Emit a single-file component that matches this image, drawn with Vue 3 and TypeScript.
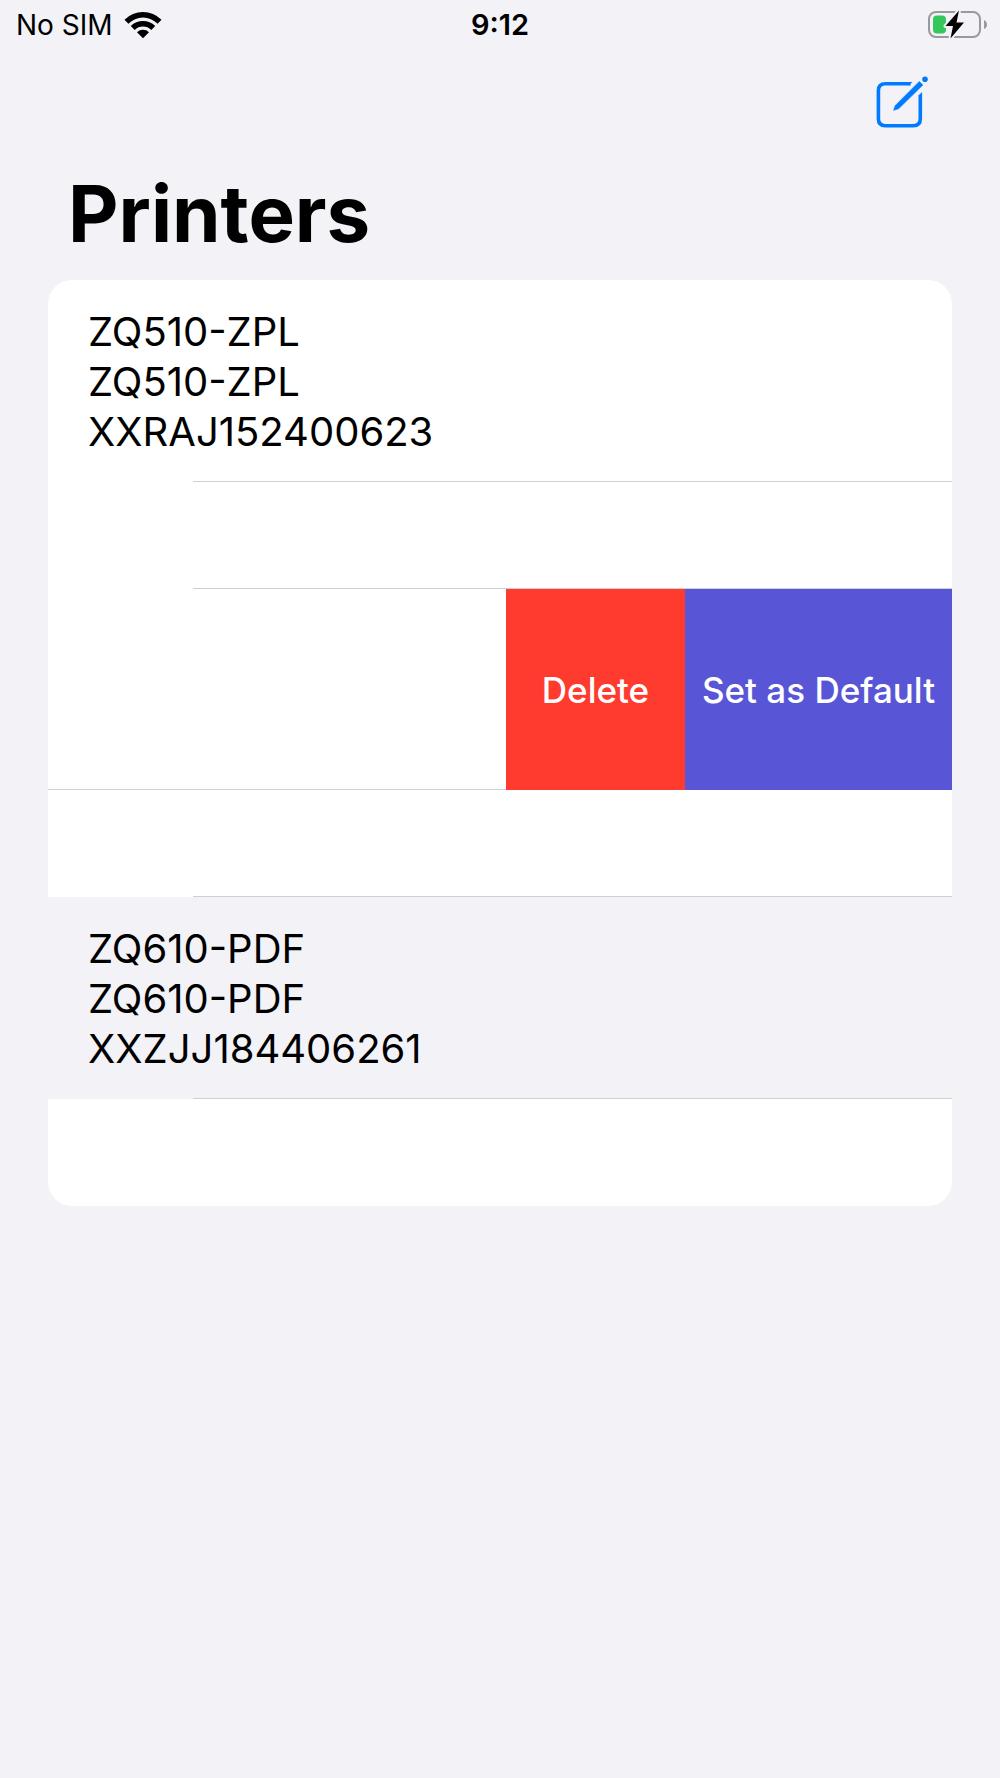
<script setup lang="ts">
interface Action {
  label: string
  kind: 'delete' | 'default'
}

interface Row {
  id: number
  lines?: string[]
  actions?: Action[]
  selected?: boolean
}

const rows: Row[] = [
  { id: 1, lines: ['ZQ510-ZPL', 'ZQ510-ZPL', 'XXRAJ152400623'] },
  { id: 2 },
  {
    id: 3,
    actions: [
      { label: 'Delete', kind: 'delete' },
      { label: 'Set as Default', kind: 'default' },
    ],
  },
  { id: 4 },
  { id: 5, lines: ['ZQ610-PDF', 'ZQ610-PDF', 'XXZJJ184406261'], selected: true },
  { id: 6 },
]
</script>

<template>
  <div class="screen">
    <div class="status">
      <div class="carrier">
        <span>No SIM</span>
        <svg width="38" height="28" viewBox="0 0 38 28" aria-hidden="true">
          <path d="M0.5 8.8A26 26 0 0 1 37.5 8.8L33.6 12.7A20.5 20.5 0 0 0 4.4 12.7Z" />
          <path d="M6.8 15.1A17.2 17.2 0 0 1 31.2 15.1L27.3 19A11.7 11.7 0 0 0 10.7 19Z" />
          <path d="M13 21.3A8.5 8.5 0 0 1 25 21.3L19 27.3Z" />
        </svg>
      </div>
      <time class="time">9:12</time>
      <div class="power">
        <svg width="60" height="30" viewBox="0 0 60 30" role="img" aria-label="Charging">
          <rect x="2" y="2" width="51" height="25" rx="7" fill="none" stroke="#9a9a9e" stroke-width="2" />
          <path d="M57 10Q60 11.500 60 14.500T57 19Z" fill="#9a9a9e" />
          <rect x="6" y="5.500" width="13" height="18" rx="4" fill="#34c759" />
          <path
            d="M32 0.500L18.500 16H26L23.500 28.500L37 12.500H29.500Z"
            fill="#000"
            stroke="#f2f2f7"
            stroke-width="4"
            stroke-linejoin="round"
            paint-order="stroke"
          />
        </svg>
      </div>
    </div>

    <header class="nav">
      <button class="compose" type="button" aria-label="Edit printers">
        <svg width="54" height="54" viewBox="0 0 54 54" fill="none" aria-hidden="true">
          <path d="M34.500 8.700H9.300Q2.400 8.700 2.400 15.600V43.800Q2.400 50.700 9.300 50.700H37.400Q44.300 50.700 44.300 43.800V20.500" stroke="#007aff" stroke-width="3.600" />
          <path d="M34 6.900H36.400L32.800 10.500H34ZM42.500 21V20.600L46.100 17V21Z" fill="#007aff" />
          <path d="M17.600 35.300L19.300 30.500L43.300 6.400L46.900 10L22.600 33.700Z" fill="#007aff" stroke="#007aff" stroke-width="0.600" stroke-linejoin="round" />
          <circle cx="49" cy="4.300" r="2.800" fill="#007aff" />
        </svg>
      </button>
    </header>

    <main>
      <h1>Printers</h1>
      <ul class="list">
        <li
          v-for="row in rows"
          :key="row.id"
          class="row"
          :class="{ selected: row.selected, swiped: row.actions }"
        >
          <div v-if="row.lines" class="info">
            <p v-for="(line, i) in row.lines" :key="i">{{ line }}</p>
          </div>
          <div v-if="row.actions" class="actions">
            <button
              v-for="action in row.actions"
              :key="action.kind"
              type="button"
              :class="action.kind"
            >
              {{ action.label }}
            </button>
          </div>
        </li>
      </ul>
    </main>
  </div>
</template>

<style>
body {
  margin: 0;
  background: #f2f2f7;
}
</style>

<style scoped>
.screen {
  min-height: 100vh;
  background: #f2f2f7;
  color: #000;
  font-family: Inter, "Liberation Sans", sans-serif;
}

.status {
  display: grid;
  grid-template-columns: 1fr auto 1fr;
  align-items: center;
  height: 50px;
  padding: 0 13px;
  font-size: 28px;
  line-height: 36px;
}

.carrier {
  display: flex;
  align-items: center;
  gap: 11px;
  padding-left: 3px;
}

.time {
  font-size: 29px;
  font-weight: 600;
}

.power {
  display: flex;
  justify-content: flex-end;
}

.nav {
  display: flex;
  justify-content: flex-end;
  height: 114px;
  padding: 25px 70px 0 0;
  box-sizing: border-box;
}

.compose {
  width: 54px;
  height: 54px;
  padding: 0;
  border: 0;
  background: none;
}

svg {
  display: block;
}

main {
  padding: 0 48px;
}

h1 {
  margin: 0 20px 16px;
  font-size: 78px;
  font-weight: 700;
  line-height: 100px;
}

.list {
  margin: 0;
  padding: 0;
  overflow: hidden;
  list-style: none;
  background: #fff;
  border-radius: 24px;
}

.row {
  position: relative;
  min-height: 107px;
}

.row:not(:last-child)::after {
  content: "";
  position: absolute;
  right: 0;
  bottom: 0;
  left: 145px;
  height: 1px;
  background: #d0d0d3;
}

.row.swiped::after {
  left: 0;
  right: 446px;
}

.selected {
  background: #f2f2f7;
}

.info {
  padding: 27px 40px 25px;
  font-size: 40px;
  line-height: 50px;
}

.info p {
  margin: 0;
}

.actions {
  display: flex;
  justify-content: flex-end;
  height: 201px;
}

.actions button {
  padding: 0;
  border: 0;
  color: #fff;
  font-family: inherit;
  font-size: 35px;
  font-weight: 500;
}

.delete {
  width: 179px;
  background: #ff3b30;
}

.default {
  width: 267px;
  background: #5856d6;
}
</style>
